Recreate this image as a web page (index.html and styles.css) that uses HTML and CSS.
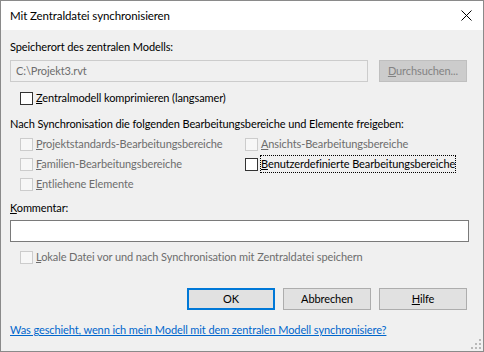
FILE: index.html
```html
<!DOCTYPE html>
<html>
<head>
<meta charset="utf-8">
<link rel="stylesheet" href="styles.css">
</head>
<body>
<div class="window">
  <div class="titlebar">
    <span class="title">Mit Zentraldatei synchronisieren</span>
    <svg class="close" width="11" height="11" viewBox="0 0 11 11"><path d="M0.5 0.5 L10.5 10.5 M10.5 0.5 L0.5 10.5" stroke="#000" stroke-width="1" fill="none"/></svg>
  </div>
  <div class="content">
    <div class="label l1">Speicherort des zentralen Modells:</div>
    <div class="pathrow">
      <div class="field disabled">C:\Projekt3.rvt</div>
      <div class="btn btn-disabled"><u>D</u>urchsuchen...</div>
    </div>
    <label class="cb cb-compress"><span class="box"></span><span class="txt"><u>Z</u>entralmodell komprimieren (langsamer)</span></label>
    <div class="label l2">Nach Synchronisation die folgenden Bearbeitungsbereiche und Elemente freigeben:</div>
    <div class="grid">
      <label class="cb off"><span class="box"></span><span class="txt"><u>P</u>rojektstandards-Bearbeitungsbereiche</span></label>
      <label class="cb off"><span class="box"></span><span class="txt"><u>A</u>nsichts-Bearbeitungsbereiche</span></label>
      <label class="cb off"><span class="box"></span><span class="txt"><u>F</u>amilien-Bearbeitungsbereiche</span></label>
      <label class="cb"><span class="box"></span><span class="txt focus"><u>B</u>enutzerdefinierte Bearbeitungsbereiche</span></label>
      <label class="cb off"><span class="box"></span><span class="txt"><u>E</u>ntliehene Elemente</span></label>
    </div>
    <div class="label l3"><u>K</u>ommentar:</div>
    <div class="field comment"></div>
    <label class="cb off cb-local"><span class="box"></span><span class="txt"><u>L</u>okale Datei vor und nach Synchronisation mit Zentraldatei speichern</span></label>
    <div class="buttons">
      <div class="btn btn-default">OK</div>
      <div class="btn">Abbrechen</div>
      <div class="btn"><u>H</u>ilfe</div>
    </div>
    <a class="link" href="#">Was geschieht, wenn ich mein Modell mit dem zentralen Modell synchronisiere?</a>
  </div>
  <svg class="grip" width="10" height="10" viewBox="0 0 10 10" fill="#b8b8b8">
    <rect x="8" y="0" width="2" height="2"/>
    <rect x="4" y="4" width="2" height="2"/><rect x="8" y="4" width="2" height="2"/>
    <rect x="0" y="8" width="2" height="2"/><rect x="4" y="8" width="2" height="2"/><rect x="8" y="8" width="2" height="2"/>
  </svg>
</div>
</body>
</html>
```
FILE: styles.css
```css
html, body {
  margin: 0;
  padding: 0;
}
body {
  font-family: Lato, "Liberation Sans", sans-serif;
  font-size: 11px;
  letter-spacing: -0.1px;
  color: #000;
}
.window {
  position: relative;
  width: 484px;
  height: 352px;
  box-sizing: border-box;
  border: 1px solid #8a8a8a;
  background: #f0f0f0;
  display: flex;
  flex-direction: column;
}
.titlebar {
  height: 29px;
  background: #fff;
  display: flex;
  align-items: center;
  justify-content: space-between;
  padding: 0 11px 0 9px;
  flex: none;
}
.title {
  font-size: 11.5px;
  line-height: 16px;
}
.content {
  padding: 0 14px 0 9px;
  display: flex;
  flex-direction: column;
}
.label {
  line-height: 16px;
  height: 16px;
  white-space: nowrap;
}
.l1 { margin-top: 9px; }
.pathrow {
  margin-top: 5px;
  display: flex;
  gap: 11px;
  align-items: center;
}
.field {
  box-sizing: border-box;
  height: 22px;
  border: 1px solid #7a7a7a;
  background: #fff;
  line-height: 20px;
  padding-left: 5px;
}
.field.disabled {
  width: 358px;
  border-color: #cccccc;
  background: #f0f0f0;
  color: #6d6d6d;
}
.btn {
  box-sizing: border-box;
  width: 88px;
  height: 22px;
  border: 1px solid #adadad;
  background: #e1e1e1;
  text-align: center;
  line-height: 20px;
}
.btn-disabled {
  width: 88px;
  background: #cccccc;
  border-color: #bfbfbf;
  color: #838383;
}
.btn-default {
  border: 2px solid #0078d7;
  line-height: 18px;
}
.cb {
  display: flex;
  align-items: center;
  height: 20px;
  line-height: 16px;
  white-space: nowrap;
}
.box {
  box-sizing: border-box;
  width: 13px;
  height: 13px;
  border: 1px solid #333;
  background: #fff;
  margin-left: 10px;
  margin-right: 3px;
  flex: none;
}
.off .box {
  border-color: #cccccc;
  background: #f7f7f7;
}
.off .txt {
  color: #6d6d6d;
}
.focus {
  outline: 1px dotted #000;
  outline-offset: 0;
}
.cb-compress { margin-top: 6px; }
.l2 { margin-top: 8px; }
.grid {
  margin-top: 2px;
  display: grid;
  grid-template-columns: 225px auto;
}
.l3 { margin-top: 6px; }
.comment {
  margin-top: 4px;
  height: 22px;
}
.cb-local { margin-top: 5px; }
.buttons {
  margin-top: 21px;
  display: flex;
  justify-content: flex-end;
  gap: 8px;
  padding-right: 2px;
}
.link {
  margin-top: 12px;
  color: #0066cc;
  text-decoration: underline;
  line-height: 16px;
  align-self: flex-start;
}
.grip {
  position: absolute;
  right: 2px;
  bottom: 2px;
}
```
